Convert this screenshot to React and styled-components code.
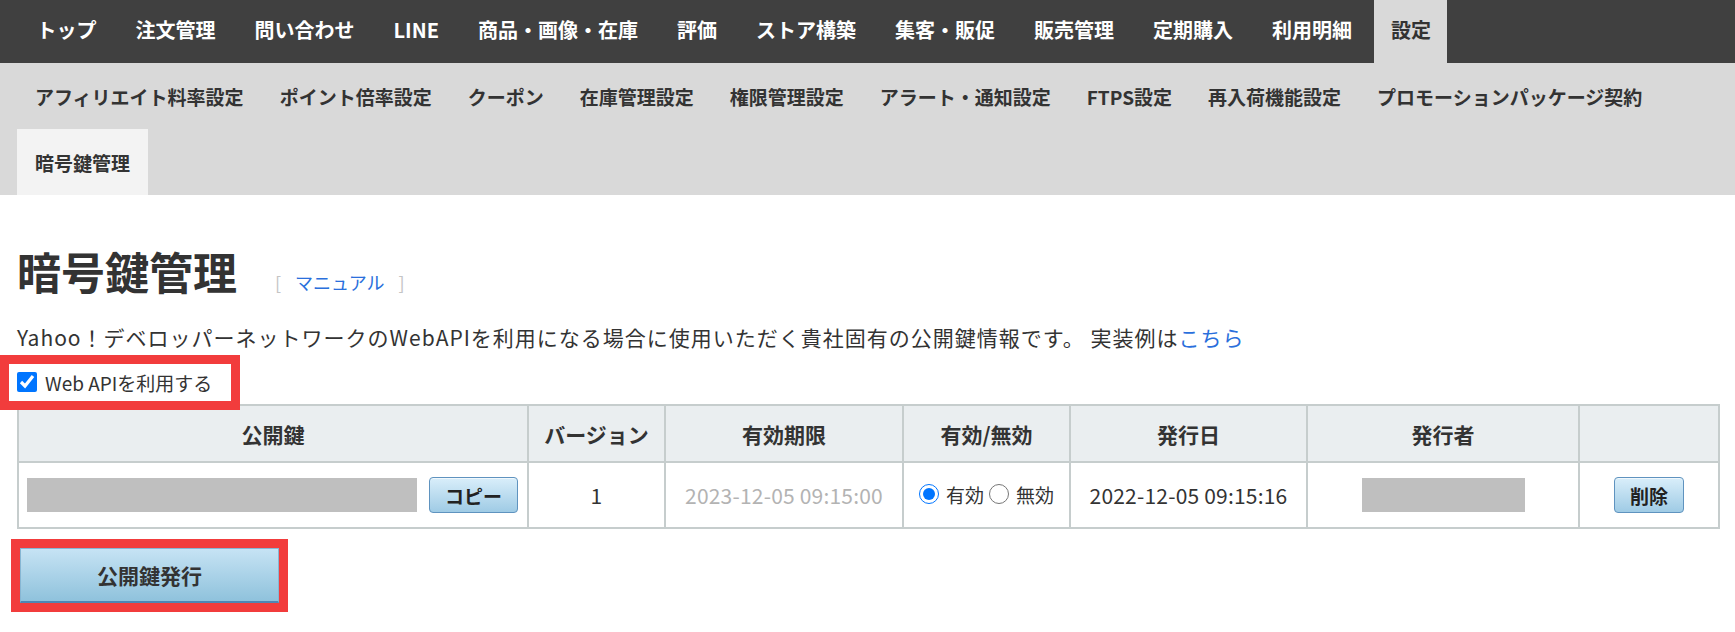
import styled, { createGlobalStyle } from "styled-components";

const FONT = `"Noto Sans CJK JP", "Noto Sans", sans-serif`;
const FRAME_RED = "#f23c3c";

const GlobalStyle = createGlobalStyle`
  html, body {
    margin: 0;
    padding: 0;
    background: #fff;
  }
  body {
    font-family: ${FONT};
    color: #333;
  }
  * {
    box-sizing: border-box;
  }
`;

const TopNav = styled.nav`
  display: flex;
  height: 63px;
  padding-left: 17px;
  background: #404040;
`;

const TopItem = styled.a`
  display: flex;
  align-items: center;
  margin: 0 3px;
  padding: 0 16.5px 5px;
  font-size: 20px;
  font-weight: 700;
  white-space: nowrap;
  color: ${(p) => (p.$active ? "#333" : "#fff")};
  background: ${(p) => (p.$active ? "#d9d9d9" : "transparent")};
`;

const SubNav = styled.nav`
  display: flex;
  flex-wrap: wrap;
  padding: 0 17px;
  background: #d9d9d9;
`;

const SubItem = styled.a`
  display: flex;
  align-items: center;
  height: 66px;
  padding: 0 18px;
  font-size: 19px;
  font-weight: 700;
  white-space: nowrap;
  color: #333;
  background: ${(p) => (p.$active ? "#f3f3f3" : "transparent")};
`;

const Main = styled.main`
  padding: 0 17px 40px;
`;

const TitleRow = styled.div`
  display: flex;
  align-items: baseline;
  margin-top: 50px;
`;

const Title = styled.h1`
  margin: 0;
  font-size: 44px;
  line-height: 53px;
  font-weight: 700;
  color: #333;
`;

const Manual = styled.span`
  margin-left: 38px;
  font-size: 18px;
  color: #c4c4c4;
`;

const Link = styled.a`
  color: #2a6fdc;
  text-decoration: none;
  margin: ${(p) => (p.$spaced ? "0 14px" : "0")};
`;

const Lead = styled.p`
  margin: 24px 0 0;
  font-size: 21px;
  line-height: 30px;
  letter-spacing: 1px;
  color: #333;
`;

const CheckRow = styled.label`
  position: relative;
  display: flex;
  align-items: center;
  gap: 8px;
  height: 48px;
  margin-top: 4px;
  padding-top: 4px;
  font-size: 19px;
  color: #333;
`;

const Check = styled.input`
  width: 20px;
  height: 20px;
  margin: 0;
  accent-color: #0075ff;
`;

const Highlight = styled.span`
  position: absolute;
  left: -17px;
  top: -1px;
  width: 240px;
  height: 55px;
  border: 9px solid ${FRAME_RED};
  pointer-events: none;
`;

const Table = styled.table`
  width: 100%;
  table-layout: fixed;
  border-collapse: collapse;
  border: 2px solid #c6cdcd;
  font-size: 21px;
`;

const Th = styled.th`
  height: 57px;
  padding: 0;
  border: 2px solid #c6cdcd;
  background: #eaeef0;
  font-weight: 700;
  color: #333;
  text-align: center;
`;

const Td = styled.td`
  height: 66px;
  padding: 0;
  border: 2px solid #c6cdcd;
  background: #fff;
  text-align: center;
  letter-spacing: 0.2px;
  color: ${(p) => (p.$muted ? "#b3b3b3" : "#333")};
`;

const KeyCell = styled.div`
  display: flex;
  align-items: center;
  gap: 12px;
  padding: 0 8px;
`;

const Redacted = styled.div`
  width: ${(p) => p.$w}px;
  height: 34px;
  background: #bfbfbf;
  margin: ${(p) => (p.$center ? "0 auto" : "0")};
`;

const SmallButton = styled.button`
  width: ${(p) => p.$w}px;
  height: 36px;
  padding: 0;
  font-family: ${FONT};
  font-size: 19px;
  font-weight: 700;
  color: #222;
  background: linear-gradient(#d9eefa, #9fcbe5);
  border: 1px solid #5f93bf;
  border-radius: 4px;
  box-shadow: inset 0 1px 0 #f0f8fd;
`;

const RadioGroup = styled.div`
  display: inline-flex;
  align-items: center;
  font-size: 19px;
  letter-spacing: 0;
  color: #333;
`;

const Radio = styled.input`
  width: 20px;
  height: 20px;
  margin: 0 7px 0 ${(p) => (p.$first ? "0" : "5px")};
  accent-color: #0075ff;
`;

const BtnFrame = styled.div`
  display: inline-block;
  margin: 10px 0 0 -6px;
  border: 9px solid ${FRAME_RED};
  line-height: 0;
`;

const IssueButton = styled.button`
  width: 259px;
  height: 55px;
  padding: 0;
  font-family: ${FONT};
  font-size: 21px;
  font-weight: 700;
  color: #333;
  background: linear-gradient(#c6e3f4, #8fc2dc);
  border: 1px solid #86b6d3;
  border-bottom: 2px solid #4f86b3;
`;

const topItems = [
  "トップ",
  "注文管理",
  "問い合わせ",
  "LINE",
  "商品・画像・在庫",
  "評価",
  "ストア構築",
  "集客・販促",
  "販売管理",
  "定期購入",
  "利用明細",
  "設定",
];

const subItems = [
  "アフィリエイト料率設定",
  "ポイント倍率設定",
  "クーポン",
  "在庫管理設定",
  "権限管理設定",
  "アラート・通知設定",
  "FTPS設定",
  "再入荷機能設定",
  "プロモーションパッケージ契約",
  "暗号鍵管理",
];

const columns = [
  { label: "公開鍵", width: 510 },
  { label: "バージョン", width: 137 },
  { label: "有効期限", width: 238 },
  { label: "有効/無効", width: 167 },
  { label: "発行日", width: 237 },
  { label: "発行者", width: 272 },
  { label: "", width: 140 },
];

export default function App() {
  return (
    <>
      <GlobalStyle />
      <TopNav>
        {topItems.map((t) => (
          <TopItem key={t} $active={t === "設定"}>
            {t}
          </TopItem>
        ))}
      </TopNav>
      <SubNav>
        {subItems.map((t) => (
          <SubItem key={t} $active={t === "暗号鍵管理"}>
            {t}
          </SubItem>
        ))}
      </SubNav>

      <Main>
        <TitleRow>
          <Title>暗号鍵管理</Title>
          <Manual>
            [<Link $spaced>マニュアル</Link>]
          </Manual>
        </TitleRow>

        <Lead>
          Yahoo！デベロッパーネットワークのWebAPIを利用になる場合に使用いただく貴社固有の公開鍵情報です。
          実装例は<Link>こちら</Link>
        </Lead>

        <CheckRow>
          <Check type="checkbox" defaultChecked />
          Web APIを利用する
          <Highlight />
        </CheckRow>

        <Table>
          <colgroup>
            {columns.map((c, i) => (
              <col key={i} style={{ width: c.width }} />
            ))}
          </colgroup>
          <thead>
            <tr>
              {columns.map((c, i) => (
                <Th key={i}>{c.label}</Th>
              ))}
            </tr>
          </thead>
          <tbody>
            <tr>
              <Td>
                <KeyCell>
                  <Redacted $w={390} />
                  <SmallButton $w={89}>コピー</SmallButton>
                </KeyCell>
              </Td>
              <Td>1</Td>
              <Td $muted>2023-12-05 09:15:00</Td>
              <Td>
                <RadioGroup>
                  <Radio type="radio" name="state" $first defaultChecked />
                  有効
                  <Radio type="radio" name="state" />
                  無効
                </RadioGroup>
              </Td>
              <Td>2022-12-05 09:15:16</Td>
              <Td>
                <Redacted $w={163} $center />
              </Td>
              <Td>
                <SmallButton $w={70}>削除</SmallButton>
              </Td>
            </tr>
          </tbody>
        </Table>

        <BtnFrame>
          <IssueButton>公開鍵発行</IssueButton>
        </BtnFrame>
      </Main>
    </>
  );
}
